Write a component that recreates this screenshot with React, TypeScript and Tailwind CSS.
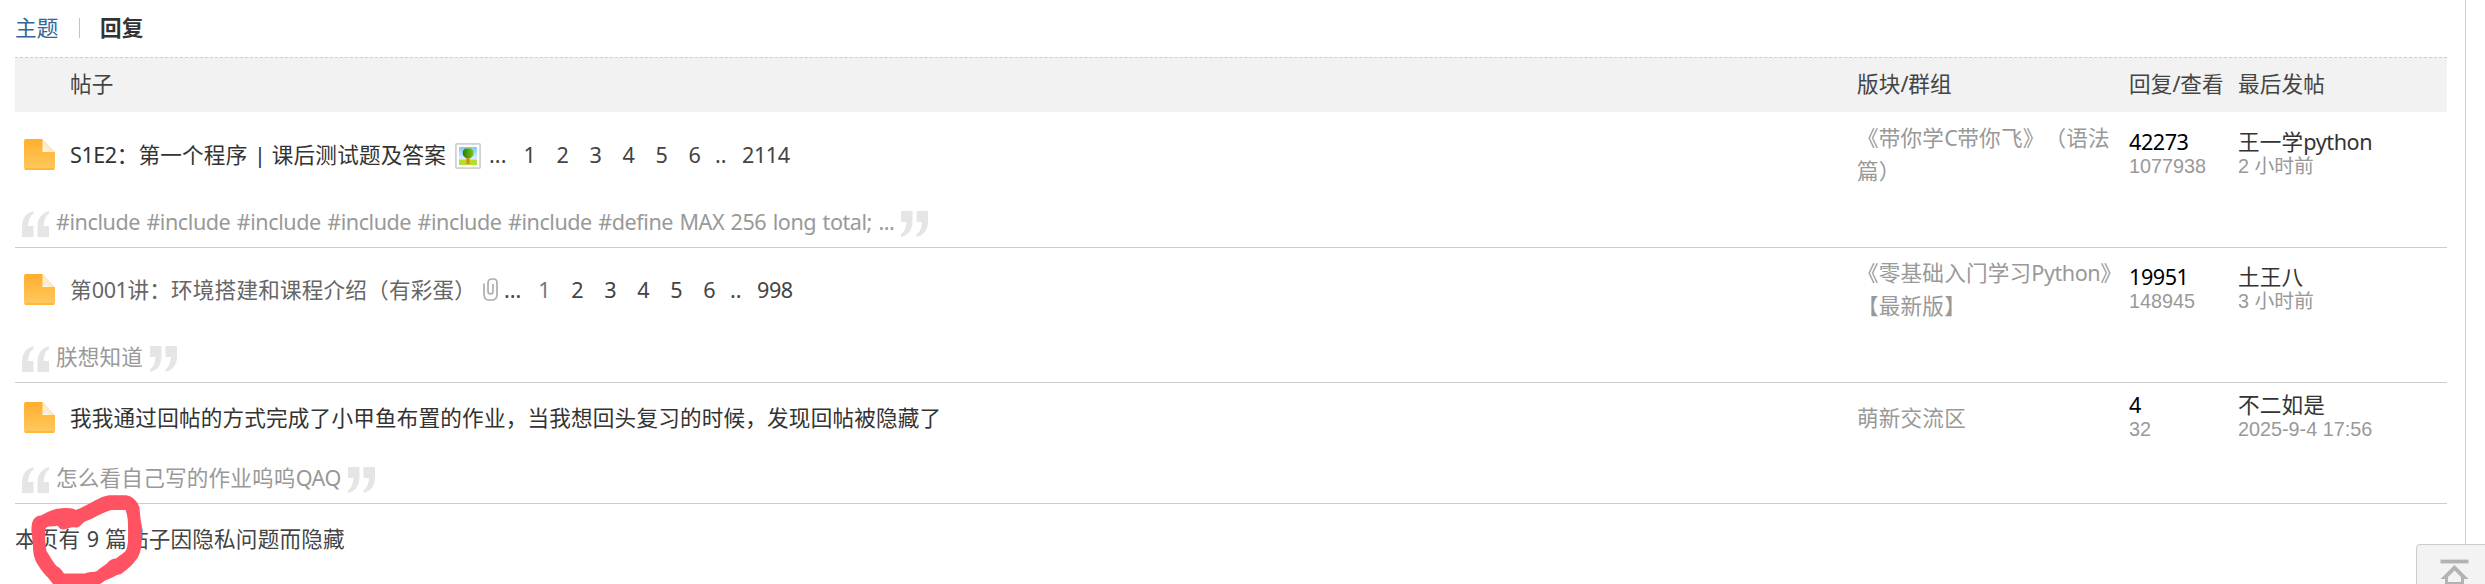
import React from "react";

const PAGE_FONT = "font-['Noto_Sans','Noto_Sans_CJK_SC',sans-serif]";
const META_FONT = "font-['Liberation_Sans','Noto_Sans_CJK_SC',sans-serif]";
const COLUMNS = "grid grid-cols-[55px_1787px_272px_109px_209px]";

/* Latin runs are set slightly tighter than Chinese ones. */
function T({ children }: { children: string }) {
  const runs = children.split(/([\x20-\x7e]+)/).filter(Boolean);
  return (
    <>
      {runs.map((run, i) => (
        <span
          key={i}
          className={/^[\x20-\x7e]/.test(run) ? "tracking-[-0.46px] [word-spacing:1.300px]" : "tracking-[0.19px]"}
        >
          {run}
        </span>
      ))}
    </>
  );
}

function FileIcon() {
  return (
    <svg className="block h-8 w-8 shrink-0" viewBox="0 0 32 32">
      <defs>
        <linearGradient id="file" x1="0" y1="0" x2="0" y2="1">
          <stop offset="0" stopColor="#ffaf2f" />
          <stop offset="1" stopColor="#ffc95f" />
        </linearGradient>
        <linearGradient id="fold" x1="0" y1="1" x2="1" y2="0">
          <stop offset="0" stopColor="#fff8ea" />
          <stop offset="0.5" stopColor="#ffe6bb" />
        </linearGradient>
      </defs>
      <path d="M2 0H19V13H31V29Q31 31 29 31H2Q0 31 0 29V2Q0 0 2 0Z" fill="url(#file)" />
      <path d="M18.5 0L31 13H18.5Z" fill="url(#fold)" />
      <path d="M1 30H30" stroke="#ffb02a" strokeWidth="1.4" />
    </svg>
  );
}

function PictureIcon() {
  return (
    <svg className="mt-0.5 ml-[9px] block h-[26px] w-[26px] shrink-0" viewBox="0 0 26 26">
      <defs>
        <linearGradient id="sky" x1="0" y1="0" x2="0" y2="1">
          <stop offset="0" stopColor="#7cc6ff" />
          <stop offset="0.8" stopColor="#f2faff" />
        </linearGradient>
        <linearGradient id="leaf" x1="0" y1="0" x2="1" y2="0">
          <stop offset="0" stopColor="#2f7d04" />
          <stop offset="1" stopColor="#7cc80c" />
        </linearGradient>
      </defs>
      <rect x="0.9" y="0.9" width="24.2" height="24.2" rx="0.8" fill="#fff" stroke="#d0d2ca" strokeWidth="1.8" />
      <rect x="4" y="4" width="18" height="18" fill="url(#sky)" />
      <rect x="4" y="16.500" width="18" height="5.500" fill="#b4de2c" />
      <rect x="11.3" y="14" width="3.4" height="7" fill="#e08a12" />
      <path d="M10 5.500H16L18.500 8V12L16 15H10.500L7.800 12V8Z" fill="url(#leaf)" />
    </svg>
  );
}

function ClipIcon() {
  return (
    <svg className="ml-[7px] block h-[23px] w-[15px] shrink-0" viewBox="0 0 15 23" fill="none" stroke="#adadad" strokeWidth="1.7">
      <path d="M1 5.500V17Q1.500 22 6 22H9Q13.500 22 14 17V5Q14 1 10.500 1H9Q5 1 5 5V13Q5 16 7.500 16Q10 16 10 13V6" />
    </svg>
  );
}

function Quote({ close = false }: { close?: boolean }) {
  return (
    <svg
      className={close ? "ml-[7px] block h-[26px] w-[27px] shrink-0 rotate-180" : "mr-[7px] block h-[26px] w-[27px] shrink-0"}
      viewBox="0 0 27 26"
      fill="#e5e5e5"
    >
      <path d="M11.500 0V2.500Q6.500 6 6 15H11.500V26H0V16Q0 3 11.500 0Z" />
      <path d="M27 0V2.500Q22 6 21.500 15H27V26H15.500V16Q15.500 3 27 0Z" />
    </svg>
  );
}

function Pages({ last, visited = false }: { last: string; visited?: boolean }) {
  return (
    <span className="flex text-[#444]">
      <span className="w-6">...</span>
      {["1", "2", "3", "4", "5", "6"].map((n) => (
        <span key={n} className={visited && n === "1" ? "w-[33px] text-center text-[#777]" : "w-[33px] text-center"}>
          {n}
        </span>
      ))}
      <span className="ml-1 w-[27px]">..</span>
      <T>{last}</T>
    </span>
  );
}

type Thread = {
  height: string;
  title: string;
  tone: string;
  icon?: React.ReactNode;
  pages?: React.ReactNode;
  forum: string[];
  replies: string;
  views: string;
  author: string;
  time: string;
  quote: string;
};

const threads: Thread[] = [
  {
    height: "h-[85px]",
    title: "S1E2：第一个程序 | 课后测试题及答案",
    tone: "text-[#333]",
    icon: <PictureIcon />,
    pages: <span className="ml-2"><Pages last="2114" /></span>,
    forum: ["《带你学C带你飞》（语法", "篇）"],
    replies: "42273",
    views: "1077938",
    author: "王一学python",
    time: "2 小时前",
    quote: "#include #include #include #include #include #include #define MAX 256 long total; ...",
  },
  {
    height: "h-[83px]",
    title: "第001讲：环境搭建和课程介绍（有彩蛋）",
    tone: "text-[#666]",
    icon: <ClipIcon />,
    pages: <span className="ml-1.5"><Pages last="998" visited /></span>,
    forum: ["《零基础入门学习Python》", "【最新版】"],
    replies: "19951",
    views: "148945",
    author: "土王八",
    time: "3 小时前",
    quote: "朕想知道",
  },
  {
    height: "h-[70px]",
    title: "我我通过回帖的方式完成了小甲鱼布置的作业，当我想回头复习的时候，发现回帖被隐藏了",
    tone: "text-[#333]",
    forum: ["萌新交流区"],
    replies: "4",
    views: "32",
    author: "不二如是",
    time: "2025-9-4 17:56",
    quote: "怎么看自己写的作业呜呜QAQ",
  },
];

const quoteHeights = ["h-[50px]", "h-[51px]", "h-[50px]"];

function ThreadRow({ t, quoteHeight }: { t: Thread; quoteHeight: string }) {
  return (
    <div className="border-b border-[#cdcdcd]">
      <div className={`${COLUMNS} ${t.height} items-center`}>
        <div className="pl-[9px]"><FileIcon /></div>
        <div className={`flex items-center pt-px ${t.tone}`}>
          <span><T>{t.title}</T></span>
          {t.icon}
          {t.pages}
        </div>
        <div className="leading-[32.4px] text-[#999]">
          {t.forum.map((line) => (
            <div key={line}><T>{line}</T></div>
          ))}
        </div>
        <div className="pb-0.5 leading-6">
          <div className="text-black"><T>{t.replies}</T></div>
          <div className={`text-[19.8px] text-[#999] ${META_FONT}`}>{t.views}</div>
        </div>
        <div className="pb-0.5 leading-6">
          <div className="text-[#333]"><T>{t.author}</T></div>
          <div className={`text-[19.8px] text-[#999] ${META_FONT}`}>{t.time}</div>
        </div>
      </div>
      <div className={`${quoteHeight} flex items-end pb-2.5 pl-[7px] text-[#999]`}>
        <Quote />
        <span className="pb-px leading-7"><T>{t.quote}</T></span>
        <Quote close />
      </div>
    </div>
  );
}

export default function App() {
  return (
    <div className={`relative h-[584px] w-[2485px] overflow-hidden bg-white text-[21.6px] whitespace-nowrap text-[#444] [text-spacing-trim:space-all] ${PAGE_FONT}`}>
      <div className="h-[584px] w-[2466px] border-r border-[#cdcdcd] pr-[18px] pl-[15px]">
        <div className="flex h-[57px] items-center pb-0.5 leading-8">
          <span className="text-[#336699]"><T>主题</T></span>
          <span className="mr-5 ml-5 h-5 w-[1.500px] bg-[#c4c4c4]" />
          <span className="font-bold text-[#333]"><T>回复</T></span>
        </div>
        <div className={`${COLUMNS} h-[55px] items-center border-t border-dashed border-[#cdcdcd] bg-[#f2f2f2] pb-px`}>
          <span />
          <span><T>帖子</T></span>
          <span><T>版块/群组</T></span>
          <span><T>回复/查看</T></span>
          <span><T>最后发帖</T></span>
        </div>
        {threads.map((t, i) => (
          <ThreadRow key={t.title} t={t} quoteHeight={quoteHeights[i]} />
        ))}
        <div className="pt-[19px] leading-8"><T>本页有 9 篇帖子因隐私问题而隐藏</T></div>
      </div>

      <svg className="absolute top-[484px] left-[24px] h-[100px] w-[128px]" viewBox="24 484 128 100">
        <path
          fill="#ff5263"
          fillRule="evenodd"
          d="M31.500 531C31 522 34 515.500 41 515.500C47 512 54 508.500 62 508.200C69 507.500 74 508.300 75.500 510C82 508 88 504 95 500.500C101 497.500 105 495.200 111 495.200H126C132 495.500 138 502 139.500 507.500C140 514 140.500 520 142 527C142 540 142 548 139 555C136 562 127 570 121 574C115 575 113 578 106 580L100 584H53C49 578 43 573 40 568C34 560 33 553 33 546Z
             M45 530C45 536 45 543 46.500 551C51 558 53 562 56.500 566C59 567 61 569 64 573.500H85C88 571.500 94 572.500 97 571C100 568 103 566.500 107 563.500C109 560 113 558.500 116 558.500C120 555 125 553 126.500 549C129 542 128 533 128 527C128 520 127.500 515 125.500 510H111C102 513 94 518 85 521.500C81 524 80 528 75 527.500C71 526.500 68 529 63 529.500C58 529 59 525 56 526C51 527 46 525 45 530Z"
        />
      </svg>

      <div className="absolute top-[544px] left-[2416px] h-[44px] w-[72px] rounded-tl-[4px] border border-[#cdcdcd] bg-[#f3f3f3]">
        <svg className="block h-[39px] w-[68px]" viewBox="2417 545 68 39">
          <path d="M2440.500 561.500H2468.500" stroke="#b3b3b3" strokeWidth="3.800" />
          <path d="M2454.500 565L2468.500 579H2464V586H2445V579H2440.500Z M2454.500 570.500L2448 577V582H2461V577Z" fill="#b3b3b3" fillRule="evenodd" />
        </svg>
      </div>
    </div>
  );
}
